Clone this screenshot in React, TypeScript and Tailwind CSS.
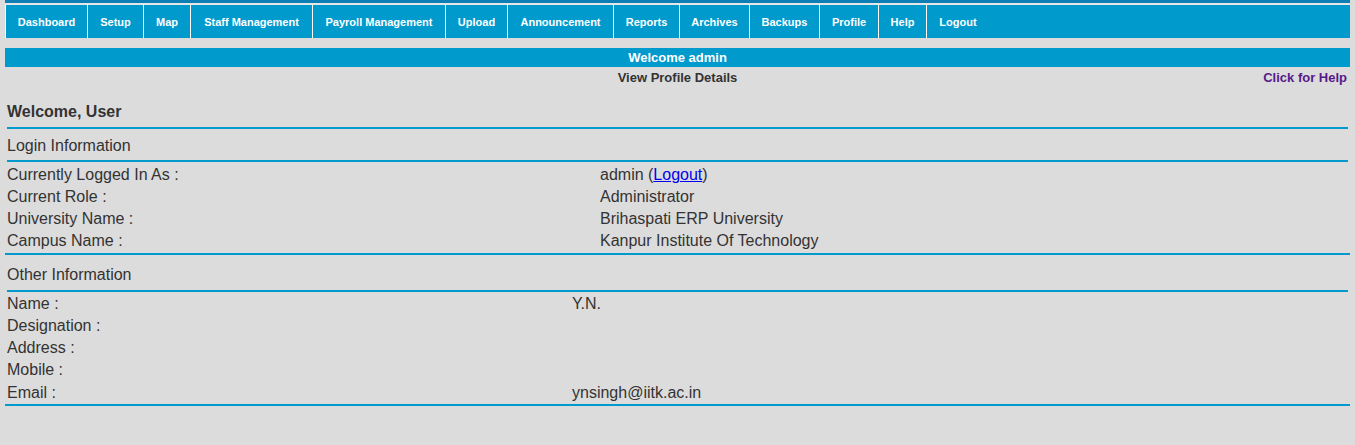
const navItems: [string, string][] = [
  ["Dashboard", "w-[82px]"],
  ["Setup", "w-[56px]"],
  ["Map", "w-[47px]"],
  ["Staff Management", "w-[122px]"],
  ["Payroll Management", "w-[133px]"],
  ["Upload", "w-[62px]"],
  ["Announcement", "w-[106px]"],
  ["Reports", "w-[66px]"],
  ["Archives", "w-[70px]"],
  ["Backups", "w-[70px]"],
  ["Profile", "w-[59px]"],
  ["Help", "w-[48px]"],
  ["Logout", "w-[63px]"],
];

const loginRows: [string, React.ReactNode][] = [
  [
    "Currently Logged In As :",
    <>
      admin (<a href="#" className="text-[#0000ee] underline">Logout</a>)
    </>,
  ],
  ["Current Role :", "Administrator"],
  ["University Name :", "Brihaspati ERP University"],
  ["Campus Name :", "Kanpur Institute Of Technology"],
];

const otherRows: [string, string, string][] = [
  ["Name :", "Y.N.", "h-[22px]"],
  ["Designation :", "", "h-[22px]"],
  ["Address :", "", "h-[22px]"],
  ["Mobile :", "", "h-[23px]"],
  ["Email :", "ynsingh@iitk.ac.in", "h-[22px]"],
];

export default function App() {
  return (
    <div className="min-h-screen bg-[#dcdcdc] px-[5px] text-[#333] font-['Liberation_Sans',Arial,sans-serif]">
      <div className="h-[3px] bg-[#0b7fb6]" />
      <div className="h-[2px] bg-[#e6e6e6]" />
      <nav className="flex h-[33px] bg-[#009acd]">
        {navItems.map(([item, w]) => (
          <a
            key={item}
            href="#"
            className={`flex shrink-0 items-center justify-center border-l border-white pt-[2px] text-[11px] font-bold text-white ${w}`}
          >
            {item}
          </a>
        ))}
      </nav>

      <div className="mt-[10px] flex h-[19px] items-center justify-center bg-[#009acd] text-[13px] font-bold text-white">
        Welcome admin
      </div>
      <div className="relative flex h-[20px] items-center justify-center pt-[2px] text-[13px] font-bold">
        View Profile Details
        <a href="#" className="absolute right-[3px] text-[#551a8b]">
          Click for Help
        </a>
      </div>

      <div className="px-[2px]">
        <div className="border-b-2 border-[#009acd] pt-[15px] pb-[6px] text-[16px] font-bold leading-[19px]">
          Welcome, User
        </div>
        <div className="border-b-2 border-[#009acd] pt-[7px] pb-[5px] text-[16px] leading-[19px]">
          Login Information
        </div>
        <div className="pt-[1px] pb-[2px]">
          {loginRows.map(([label, value]) => (
            <div key={label} className="flex h-[22px] pt-[3px] text-[16px] leading-[18px]">
              <div className="w-[593px]">{label}</div>
              <div>{value}</div>
            </div>
          ))}
        </div>
      </div>
      <div className="h-[2px] bg-[#009acd]" />

      <div className="px-[2px]">
        <div className="border-b-2 border-[#009acd] pt-[10px] pb-[6px] text-[16px] leading-[19px]">
          Other Information
        </div>
        <div className="pb-[1px]">
          {otherRows.map(([label, value, h]) => (
            <div key={label} className={`flex pt-[3px] text-[16px] leading-[18px] ${h}`}>
              <div className="w-[565px]">{label}</div>
              <div>{value}</div>
            </div>
          ))}
        </div>
      </div>
      <div className="h-[2px] bg-[#009acd]" />
    </div>
  );
}
